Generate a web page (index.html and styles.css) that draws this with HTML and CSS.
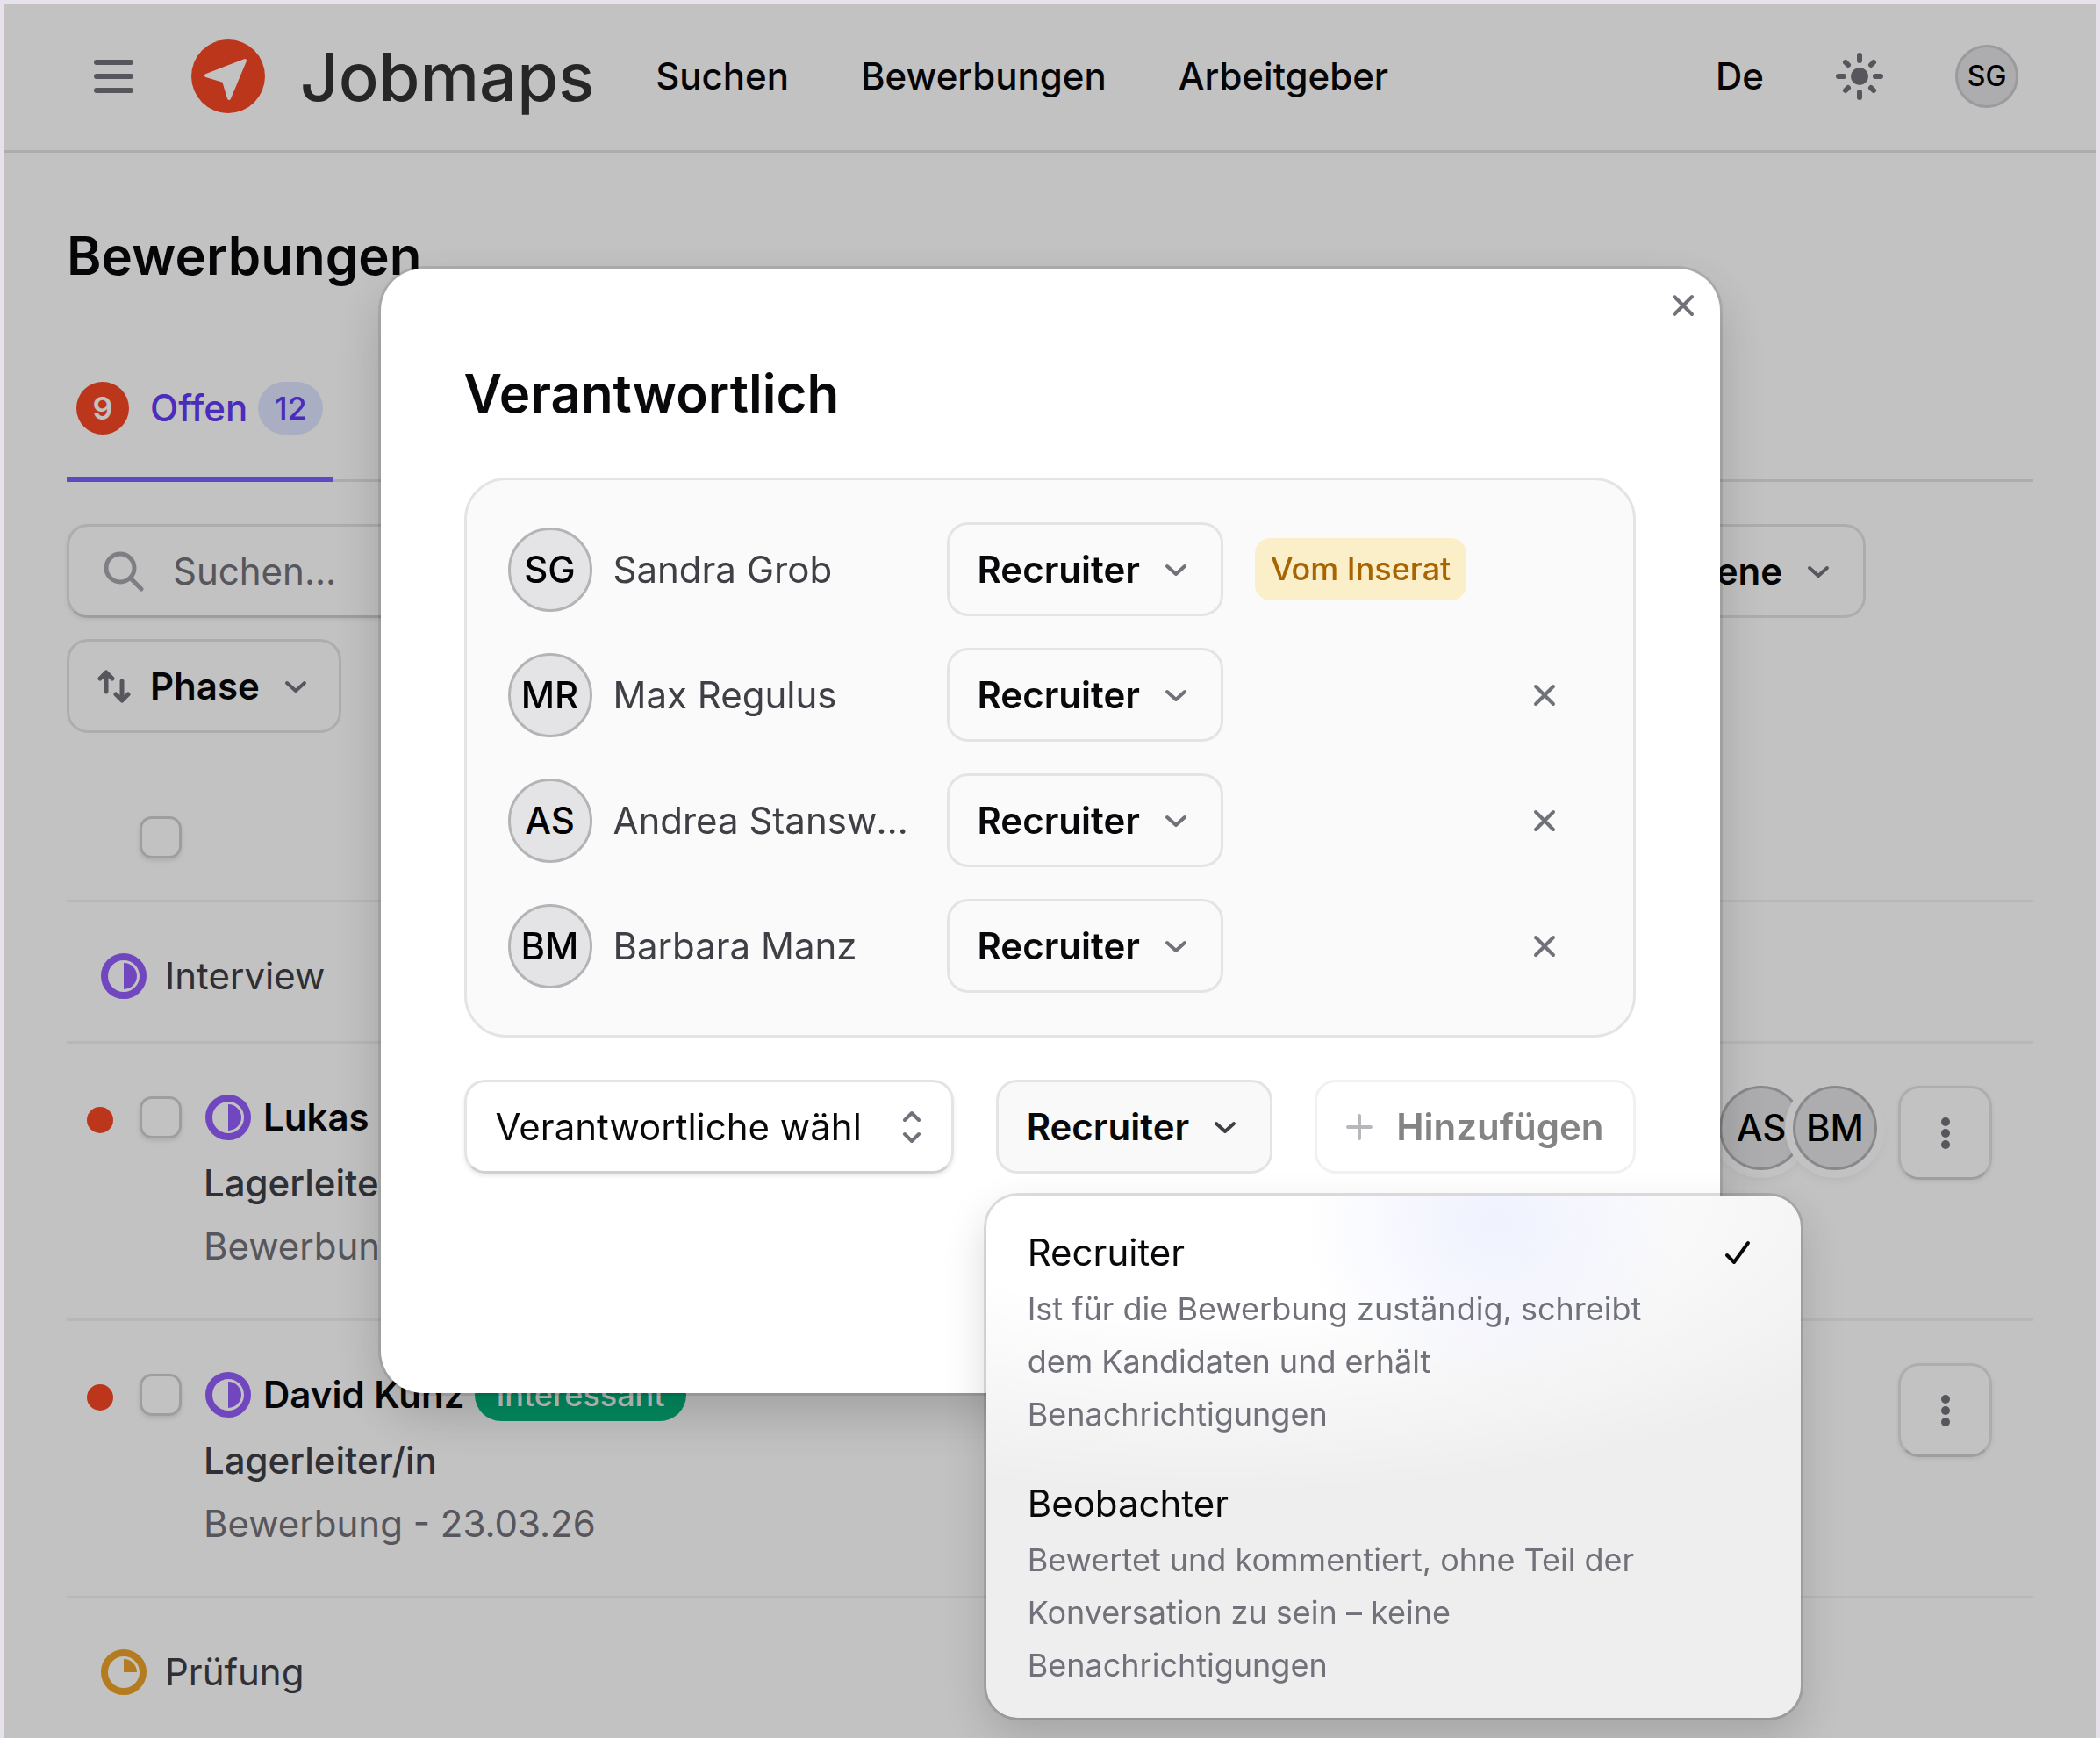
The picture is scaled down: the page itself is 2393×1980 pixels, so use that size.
FILE: index.html
```html
<!DOCTYPE html>
<html lang="de">
<head>
<meta charset="utf-8">
<title>Jobmaps – Bewerbungen</title>
<link rel="stylesheet" href="styles.css">
</head>
<body>
<svg width="0" height="0" class="sprite" aria-hidden="true">
  <symbol id="chevron" viewBox="0 0 26 16"><path d="M3 4l10 9 10-9" fill="none" stroke="currentColor" stroke-width="4" stroke-linecap="round" stroke-linejoin="round"/></symbol>
  <symbol id="cross" viewBox="0 0 26 26"><path d="M3 3l20 20M23 3L3 23" fill="none" stroke="currentColor" stroke-width="4" stroke-linecap="round"/></symbol>
  <symbol id="half" viewBox="0 0 56 56"><circle cx="28" cy="28" r="22" fill="none" stroke="currentColor" stroke-width="8"/><path d="M28 13a15 15 0 0 1 0 30z" fill="currentColor"/></symbol>
  <symbol id="quarter" viewBox="0 0 56 56"><circle cx="28" cy="28" r="22" fill="none" stroke="currentColor" stroke-width="8"/><path d="M28 13a15 15 0 0 1 15 15H28z" fill="currentColor"/></symbol>
  <symbol id="dots" viewBox="0 0 10 36"><circle cx="5" cy="5" r="5" fill="currentColor"/><circle cx="5" cy="18" r="5" fill="currentColor"/><circle cx="5" cy="31" r="5" fill="currentColor"/></symbol>
</svg>

<div class="app">
  <header class="topbar">
    <button class="icon-button" aria-label="Menü">
      <svg width="45" height="38" viewBox="0 0 45 38"><path d="M3 3h39M3 19h39M3 35h39" stroke="currentColor" stroke-width="6" stroke-linecap="round"/></svg>
    </button>
    <a class="brand" href="#">
      <svg width="84" height="84" viewBox="0 0 84 84"><circle cx="42" cy="42" r="42" fill="#f74726"/><path d="M61 24L17 41l20 6 6 20z" fill="#fff" stroke="#fff" stroke-width="4" stroke-linejoin="round"/></svg>
      <span>Jobmaps</span>
    </a>
    <nav class="mainnav">
      <a href="#">Suchen</a>
      <a href="#">Bewerbungen</a>
      <a href="#">Arbeitgeber</a>
    </nav>
    <div class="tools">
      <a href="#">De</a>
      <button class="icon-button" aria-label="Farbschema">
        <svg width="54" height="54" viewBox="0 0 54 54"><circle cx="27" cy="27" r="10" fill="currentColor"/><path d="M27 3v6M27 45v6M3 27h6M45 27h6M11 11l3 3M40 40l3 3M43 11l-3 3M14 40l-3 3" stroke="currentColor" stroke-width="6" stroke-linecap="round"/></svg>
      </button>
      <span class="avatar avatar-small">SG</span>
    </div>
  </header>

  <main class="content">
    <h1 class="title">Bewerbungen</h1>
    <div class="tabs">
      <a class="tab" href="#"><span class="alert">9</span>Offen<span class="count">12</span></a>
    </div>
    <div class="toolbar">
      <div class="filters">
        <label class="search">
          <svg width="46" height="46" viewBox="0 0 46 46"><circle cx="19" cy="19" r="16" fill="none" stroke="currentColor" stroke-width="5"/><path d="M31 31l12 12" stroke="currentColor" stroke-width="5" stroke-linecap="round"/></svg>
          <input type="search" placeholder="Suchen..." aria-label="Suchen">
        </label>
        <button class="button">Zugewiesene<svg class="chevron"><use href="#chevron"/></svg></button>
      </div>
      <button class="button button-sort">
        <svg width="38" height="38" viewBox="0 0 38 38"><path d="M10 25V4M3 10l7-7 7 7M28 13v21M21 28l7 7 7-7" fill="none" stroke="currentColor" stroke-width="5" stroke-linecap="round" stroke-linejoin="round"/></svg>
        Phase<svg class="chevron"><use href="#chevron"/></svg>
      </button>
    </div>

    <table class="list">
      <tbody>
        <tr class="row-head">
          <td class="cell-dot"></td>
          <td class="cell-check"><input type="checkbox" class="check" aria-label="Alle auswählen"></td>
          <td colspan="2"></td>
        </tr>
        <tr class="row-group">
          <td colspan="4"><div class="phase"><svg class="status violet"><use href="#half"/></svg>Interview</div></td>
        </tr>
        <tr class="row-item">
          <td class="cell-dot"><span class="dot"></span></td>
          <td class="cell-check"><input type="checkbox" class="check" aria-label="Lukas auswählen"></td>
          <td class="cell-main">
            <div class="name"><svg class="status violet"><use href="#half"/></svg><a href="#">Lukas</a></div>
            <div class="job">Lagerleiter/in</div>
            <div class="date">Bewerbung - 23.03.26</div>
          </td>
          <td class="cell-actions"><div class="actions">
            <span class="people"><span class="avatar">AS</span><span class="avatar">BM</span></span>
            <button class="more" aria-label="Mehr"><svg width="10" height="36"><use href="#dots"/></svg></button>
          </div></td>
        </tr>
        <tr class="row-item">
          <td class="cell-dot"><span class="dot"></span></td>
          <td class="cell-check"><input type="checkbox" class="check" aria-label="David Kunz auswählen"></td>
          <td class="cell-main">
            <div class="name"><svg class="status violet"><use href="#half"/></svg><a href="#">David Kunz</a><span class="pill">Interessant</span></div>
            <div class="job">Lagerleiter/in</div>
            <div class="date">Bewerbung - 23.03.26</div>
          </td>
          <td class="cell-actions"><div class="actions">
            <button class="more" aria-label="Mehr"><svg width="10" height="36"><use href="#dots"/></svg></button>
          </div></td>
        </tr>
        <tr class="row-group">
          <td colspan="4"><div class="phase"><svg class="status amber"><use href="#quarter"/></svg>Prüfung</div></td>
        </tr>
      </tbody>
    </table>
  </main>
</div>

<div class="overlay">
  <section class="modal" role="dialog" aria-modal="true" aria-labelledby="modal-title">
    <button class="icon-button close" aria-label="Schliessen"><svg width="26" height="26"><use href="#cross"/></svg></button>
    <h2 class="title" id="modal-title">Verantwortlich</h2>
    <ul class="panel">
      <li class="person">
        <span class="avatar">SG</span><span class="person-name">Sandra Grob</span>
        <button class="button">Recruiter<svg class="chevron"><use href="#chevron"/></svg></button>
        <span class="tag">Vom Inserat</span>
      </li>
      <li class="person">
        <span class="avatar">MR</span><span class="person-name">Max Regulus</span>
        <button class="button">Recruiter<svg class="chevron"><use href="#chevron"/></svg></button>
        <button class="icon-button remove" aria-label="Max Regulus entfernen"><svg width="26" height="26"><use href="#cross"/></svg></button>
      </li>
      <li class="person">
        <span class="avatar">AS</span><span class="person-name">Andrea Stanswender</span>
        <button class="button">Recruiter<svg class="chevron"><use href="#chevron"/></svg></button>
        <button class="icon-button remove" aria-label="Andrea Stanswender entfernen"><svg width="26" height="26"><use href="#cross"/></svg></button>
      </li>
      <li class="person">
        <span class="avatar">BM</span><span class="person-name">Barbara Manz</span>
        <button class="button">Recruiter<svg class="chevron"><use href="#chevron"/></svg></button>
        <button class="icon-button remove" aria-label="Barbara Manz entfernen"><svg width="26" height="26"><use href="#cross"/></svg></button>
      </li>
    </ul>
    <div class="add">
      <label class="combo">
        <input type="text" role="combobox" aria-expanded="false" aria-label="Verantwortliche" value="Verantwortliche wählen">
        <svg width="22" height="38" viewBox="0 0 22 38"><path d="M3 11l8-8 8 8M3 27l8 8 8-8" fill="none" stroke="currentColor" stroke-width="4" stroke-linecap="round" stroke-linejoin="round"/></svg>
      </label>
      <div class="dropdown">
        <button class="button button-open" aria-haspopup="menu" aria-expanded="true">Recruiter<svg class="chevron"><use href="#chevron"/></svg></button>
        <div class="menu" role="menu">
          <button class="option" role="menuitemradio" aria-checked="true">
            <span class="option-title">Recruiter
              <svg width="30" height="28" viewBox="0 0 30 28"><path d="M3 17l8 8L27 3" fill="none" stroke="currentColor" stroke-width="4" stroke-linecap="round" stroke-linejoin="round"/></svg>
            </span>
            <span class="option-text">Ist für die Bewerbung zuständig, schreibt dem Kandidaten und erhält Benachrichtigungen</span>
          </button>
          <button class="option" role="menuitemradio" aria-checked="false">
            <span class="option-title">Beobachter</span>
            <span class="option-text">Bewertet und kommentiert, ohne Teil der Konversation zu sein – keine Benachrichtigungen</span>
          </button>
        </div>
      </div>
      <button class="button button-add" disabled>
        <svg width="30" height="30" viewBox="0 0 30 30"><path d="M15 2v26M2 15h26" stroke="currentColor" stroke-width="4" stroke-linecap="round"/></svg>
        Hinzufügen
      </button>
    </div>
  </section>
</div>
</body>
</html>
```

FILE: styles.css
```css
:root {
  --ink: #09090b;
  --muted: #71717a;
  --line: #e4e4e7;
  --violet: #945efa;
  --red: #f74726;
}

* { box-sizing: border-box; }

html { background: #e7e1ec; }

body {
  margin: 0;
  padding: 4px 4px 0;
  font-family: Inter, "Liberation Sans", sans-serif;
  font-size: 42px;
  line-height: 60px;
  color: var(--ink);
}

button, input { font: inherit; color: inherit; }
button { margin: 0; padding: 0; border: 0; background: none; }
a { color: inherit; text-decoration: none; }
svg { flex: none; display: block; }
.sprite { position: absolute; }

.app {
  min-height: calc(100vh - 4px);
  background: #fff;
}

/* Top bar */
.topbar {
  display: flex;
  align-items: center;
  height: 170px;
  padding: 0 89px 2px 103px;
  border-bottom: 3px solid var(--line);
  font-weight: 500;
}
.icon-button { color: var(--muted); }
.brand {
  display: flex;
  align-items: center;
  gap: 40px;
  margin-left: 66px;
  font-size: 76px;
  color: #333;
}
.mainnav { display: flex; gap: 82px; margin-left: 70px; }
.tools { display: flex; align-items: center; gap: 82px; margin-left: auto; }

.avatar {
  display: flex;
  align-items: center;
  justify-content: center;
  flex: none;
  width: 96px;
  height: 96px;
  border: 3px solid #b4b4b7;
  border-radius: 50%;
  background: var(--line);
  color: #000;
  font-weight: 500;
}
.avatar-small { width: 72px; height: 72px; font-size: 32px; border-color: #ccccd0; }

/* Page */
.content { padding: 81px 72px 0; }
.title {
  margin: 0;
  font-size: 60px;
  line-height: 72px;
  font-weight: 600;
}
.tabs { display: flex; margin-top: 60px; box-shadow: inset 0 -3px var(--line); }
.tab {
  display: flex;
  align-items: center;
  padding: 48px 11px;
  border-bottom: 6px solid #7763ff;
  color: #633af7;
  font-weight: 500;
}
.alert, .count {
  font-size: 36px;
  text-align: center;
  border-radius: 30px;
}
.alert { width: 60px; margin-right: 24px; background: var(--red); color: #fff; font-weight: 600; }
.count { width: 74px; margin-left: 12px; background: #e0e5ff; }

.toolbar {
  display: flex;
  flex-direction: column;
  align-items: flex-start;
  gap: 24px;
  margin: 48px 0 46px;
}
.filters { display: flex; gap: 24px; width: 100%; max-width: 2050px; }
.search {
  display: flex;
  align-items: center;
  flex: 1;
  gap: 33px;
  height: 107px;
  padding: 0 39px;
  border: 3px solid var(--line);
  border-bottom-color: #d0d0d3;
  border-radius: 24px;
  box-shadow: 0 2px 5px rgba(0, 0, 0, .08);
  color: #a6a6ad;
}
.search input { flex: 1; min-width: 0; padding: 0; border: 0; outline: 0; background: none; }
.search input::placeholder { color: var(--muted); opacity: 1; }

.button {
  display: flex;
  align-items: center;
  flex: none;
  gap: 28px;
  height: 107px;
  padding: 0 38px 0 32px;
  border: 3px solid var(--line);
  border-radius: 24px;
  font-weight: 600;
  white-space: nowrap;
}
.button svg { color: var(--muted); }
.chevron { width: 26px; height: 16px; }
.button-sort { padding-right: 36px; }
.button-sort svg:first-child { margin-right: -6px; }

/* Applications */
.list { width: 100%; border-collapse: collapse; }
.list td { padding: 0; vertical-align: top; }
.list tr { box-shadow: inset 0 -3px #f1f1f3; }
.list tr:last-child { box-shadow: none; }
.row-head { height: 147px; }
.row-group { height: 161px; }
.row-group:last-child { height: 150px; }
.row-item { height: 316px; }
.list .cell-dot { width: 83px; padding: 72px 0 0 23px; }
.dot { display: block; width: 30px; height: 30px; border-radius: 50%; background: var(--red); }
.list .cell-check { width: 73px; padding-top: 60px; }
.row-head .cell-check { padding-top: 49px; }
.check {
  appearance: none;
  display: block;
  width: 48px;
  height: 48px;
  margin: 0;
  border: 3px solid #d0d0d3;
  border-radius: 14px;
  box-shadow: 0 3px 5px rgba(0, 0, 0, .1);
}
.phase { display: flex; align-items: center; gap: 19px; padding: 54px 0 0 37px; color: #3f3f46; }
.status { width: 56px; height: 56px; }
.violet { color: var(--violet); }
.amber { color: #eda42a; }
.list .cell-main { padding-top: 45px; }
.name { display: flex; align-items: center; gap: 12px; height: 78px; font-weight: 600; }
.pill {
  padding: 0 24px;
  border-radius: 30px;
  background: #03b67c;
  color: #fff;
  font-size: 36px;
  font-weight: 500;
}
.job, .date { line-height: 72px; }
.job { color: #3f3f46; font-weight: 500; }
.date { color: var(--muted); }
.list .cell-actions { padding: 48px 47px 0 0; }
.actions { display: flex; justify-content: flex-end; gap: 24px; }
.people { display: flex; }
.people .avatar { border-color: #b4b4b9; box-shadow: 0 0 0 9px #fff, 0 6px 16px rgba(0, 0, 0, .15); }
.people .avatar + .avatar { margin-left: -12px; }
.more {
  display: flex;
  align-items: center;
  justify-content: center;
  width: 107px;
  height: 107px;
  border: 3px solid var(--line);
  border-bottom-color: #d0d0d3;
  border-radius: 24px;
  box-shadow: 0 2px 5px rgba(0, 0, 0, .08);
  color: var(--muted);
}

/* Dialog */
.overlay {
  position: fixed;
  inset: 4px 4px 0;
  display: flex;
  align-items: flex-start;
  justify-content: center;
  padding-top: 302px;
  background: rgba(0, 0, 0, .24);
}
.modal {
  position: relative;
  width: 1526px;
  max-width: 100%;
  padding: 106px 96px 250px 95px;
  border-radius: 48px;
  background: #fff;
  box-shadow: 0 0 0 3px rgba(0, 0, 0, .1), 0 24px 60px rgba(0, 0, 0, .18);
}
.close { position: absolute; top: 29px; right: 29px; }
.panel {
  display: flex;
  flex-direction: column;
  gap: 36px;
  margin: 60px 0 48px;
  padding: 48px 48px 48px 47px;
  list-style: none;
  border: 3px solid var(--line);
  border-radius: 48px;
  background: #fafafa;
}
.person { display: flex; align-items: center; }
.person-name {
  width: 344px;
  margin: 0 36px 0 24px;
  overflow: hidden;
  text-overflow: ellipsis;
  white-space: nowrap;
  color: #3f3f46;
}
.tag {
  margin-left: 36px;
  padding: 0 18px;
  border-radius: 18px;
  background: #faefc8;
  color: #a86400;
  font-size: 36px;
  line-height: 71px;
  font-weight: 500;
}
.remove { margin: 0 40px 0 auto; }

.add { display: flex; gap: 48px; }
.combo {
  display: flex;
  align-items: center;
  flex: 1;
  min-width: 0;
  gap: 46px;
  height: 107px;
  padding: 0 34px 0 33px;
  border: 3px solid var(--line);
  border-bottom-color: #d0d0d3;
  border-radius: 24px;
  box-shadow: 0 3px 5px rgba(0, 0, 0, .08);
  color: var(--muted);
}
.combo input { flex: 1; min-width: 0; padding: 0; border: 0; outline: 0; background: none; color: var(--ink); }
.button-open { background: #f9f9f9; }
.button-open svg { color: #3f3f46; }
.button-add { gap: 27px; padding: 0 33px; border-color: #f1f1f3; color: #848485; }
.button-add svg { color: #b8b8bc; }

.dropdown { position: relative; }
.menu {
  position: absolute;
  top: 132px;
  left: -11px;
  width: 928px;
  padding: 31px 47px 30px;
  border-radius: 36px;
  background:
    radial-gradient(ellipse 220px 200px at 580px 30px, #eff1fe, rgba(239, 241, 254, 0)),
    radial-gradient(ellipse 900px 340px at 260px 0, #fff 40%, rgba(255, 255, 255, 0)),
    #eee;
  box-shadow: 0 0 0 3px rgba(0, 0, 0, .12), 0 20px 50px rgba(0, 0, 0, .16);
}
.option { display: block; width: 100%; text-align: left; }
.option + .option { margin-top: 38px; }
.option-title { display: flex; align-items: center; justify-content: space-between; padding-right: 10px; line-height: 68px; }
.option-text { display: block; max-width: 730px; font-size: 36px; color: var(--muted); }
```
